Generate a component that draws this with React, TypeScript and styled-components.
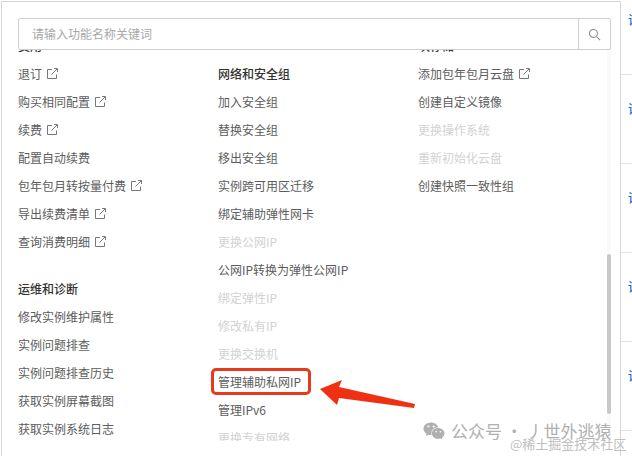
import React from 'react';
import styled, { createGlobalStyle } from 'styled-components';
import { FaWeixin } from 'react-icons/fa';

type Entry = { label: string; external?: boolean; disabled?: boolean; marked?: boolean };
type Group = { title: string; items: Entry[] };

const columns: { offset: number; groups: Group[] }[] = [
  {
    offset: 0,
    groups: [
      {
        title: '费用',
        items: [
          { label: '退订', external: true },
          { label: '购买相同配置', external: true },
          { label: '续费', external: true },
          { label: '配置自动续费' },
          { label: '包年包月转按量付费', external: true },
          { label: '导出续费清单', external: true },
          { label: '查询消费明细', external: true },
        ],
      },
      {
        title: '运维和诊断',
        items: [
          { label: '修改实例维护属性' },
          { label: '实例问题排查' },
          { label: '实例问题排查历史' },
          { label: '获取实例屏幕截图' },
          { label: '获取实例系统日志' },
        ],
      },
    ],
  },
  {
    offset: 28,
    groups: [
      {
        title: '网络和安全组',
        items: [
          { label: '加入安全组' },
          { label: '替换安全组' },
          { label: '移出安全组' },
          { label: '实例跨可用区迁移' },
          { label: '绑定辅助弹性网卡' },
          { label: '更换公网IP', disabled: true },
          { label: '公网IP转换为弹性公网IP' },
          { label: '绑定弹性IP', disabled: true },
          { label: '修改私有IP', disabled: true },
          { label: '更换交换机', disabled: true },
          { label: '管理辅助私网IP', marked: true },
          { label: '管理IPv6' },
          { label: '更换专有网络', disabled: true },
        ],
      },
    ],
  },
  {
    offset: 0,
    groups: [
      {
        title: '块存储',
        items: [
          { label: '添加包年包月云盘', external: true },
          { label: '创建自定义镜像' },
          { label: '更换操作系统', disabled: true },
          { label: '重新初始化云盘', disabled: true },
          { label: '创建快照一致性组' },
        ],
      },
    ],
  },
];

const GlobalStyle = createGlobalStyle`
  html, body {
    margin: 0;
    background: #fff;
    font-family: "Noto Sans CJK SC", "Noto Sans", sans-serif;
  }
`;

const Page = styled.div`
  display: flex;
  width: 632px;
  height: 456px;
  overflow: hidden;
  position: relative;
`;

const Popup = styled.div`
  flex: none;
  box-sizing: border-box;
  width: 620px;
  height: 455px;
  margin: 1px 0 0 1px;
  padding: 16px 9px 0 16px;
  border: 1px solid #d6d6d6;
  border-bottom: none;
  display: flex;
  flex-direction: column;
`;

const SearchBar = styled.div`
  flex: none;
  display: flex;
  height: 32px;
  box-sizing: border-box;
  border: 1px solid #cfcfcf;
  border-radius: 2px;
  position: relative;
  z-index: 1;
  background: #fff;
`;

const SearchInput = styled.input`
  flex: 1;
  min-width: 0;
  border: none;
  outline: none;
  padding: 0 13px 2px;
  font: 12px "Noto Sans CJK SC", sans-serif;
  background: transparent;

  &::placeholder {
    color: #a8a8a8;
    opacity: 1;
  }
`;

const SearchButton = styled.div`
  flex: none;
  width: 31px;
  border-left: 1px solid #cfcfcf;
  display: flex;
  align-items: center;
  justify-content: center;
  color: #888;
`;

const ListArea = styled.div`
  flex: none;
  height: 391px;
  overflow: hidden;
  position: relative;
`;

const Grid = styled.div`
  display: grid;
  grid-template-columns: repeat(3, 200px);
  margin-top: -17px;
`;

const Column = styled.div<{ $offset: number }>`
  padding-top: ${(p) => p.$offset}px;
`;

const GroupBox = styled.div`
  margin-bottom: 21px;
`;

const GroupTitle = styled.div`
  height: 26px;
  line-height: 26px;
  font-size: 12px;
  font-weight: 500;
  color: #333;
`;

const Item = styled.div<{ $disabled?: boolean; $marked?: boolean }>`
  position: relative;
  height: 28px;
  display: flex;
  align-items: center;
  gap: 5px;
  font-size: 12px;
  color: ${(p) => (p.$disabled ? '#d2d2d2' : '#5c5c5c')};

  ${(p) =>
    p.$marked &&
    `
    &::after {
      content: '';
      position: absolute;
      left: -7px;
      top: 1px;
      width: 100px;
      height: 27px;
      box-sizing: border-box;
      border: 3px solid #e8391b;
      border-radius: 5px;
    }
  `}
`;

const Track = styled.div`
  position: absolute;
  top: 0;
  bottom: 0;
  right: 0;
  width: 4px;
  background: #fafafa;
`;

const Thumb = styled.div`
  position: absolute;
  top: 204px;
  left: 0;
  width: 4px;
  height: 160px;
  border-radius: 2px;
  background: #c8c8c8;
`;

const BackTable = styled.div`
  flex: 1;
  margin-top: -14px;
  overflow: hidden;
`;

const BackRow = styled.div`
  height: 89px;
  box-sizing: border-box;
  border-bottom: 1px solid #e2e2e2;
  padding: 26px 0 0 7px;
  font-size: 12px;
  font-weight: 500;
  line-height: 16px;
  white-space: nowrap;
  color: #1a66c9;
`;

const Arrow = styled.svg`
  position: absolute;
  left: 318px;
  top: 378px;
`;

const Watermark = styled.div`
  position: absolute;
  left: 423px;
  top: 420px;
  display: flex;
  align-items: center;
  gap: 6px;
  font-size: 17px;
  line-height: 22px;
  color: #b0b0b0;
  white-space: nowrap;
`;

const SubMark = styled.div`
  position: absolute;
  left: 510px;
  top: 436px;
  font-size: 13px;
  line-height: 16px;
  color: #c0c0c0;
  white-space: nowrap;
`;

const ExternalIcon = () => (
  <svg width="11" height="11" viewBox="0 0 11 11" fill="none" stroke="#777" strokeWidth="1">
    <path d="M5 1.5H0.5V10.5H9.5V6.5" />
    <path d="M4.5 6.5L10 1M7 0.5H10.5V4" />
  </svg>
);

const SearchIcon = () => (
  <svg width="13" height="13" viewBox="0 0 14 14" fill="none" stroke="currentColor" strokeWidth="1.1">
    <circle cx="5.8" cy="5.8" r="4.3" />
    <path d="M9 9L13 13" />
  </svg>
);

export default function App() {
  return (
    <Page>
      <GlobalStyle />
      <Popup>
        <SearchBar>
          <SearchInput placeholder="请输入功能名称关键词" readOnly />
          <SearchButton>
            <SearchIcon />
          </SearchButton>
        </SearchBar>
        <ListArea>
          <Grid>
            {columns.map((column, i) => (
              <Column key={i} $offset={column.offset}>
                {column.groups.map((group) => (
                  <GroupBox key={group.title}>
                    <GroupTitle>{group.title}</GroupTitle>
                    {group.items.map((item) => (
                      <Item key={item.label} $disabled={item.disabled} $marked={item.marked}>
                        {item.label}
                        {item.external && <ExternalIcon />}
                      </Item>
                    ))}
                  </GroupBox>
                ))}
              </Column>
            ))}
          </Grid>
          <Track>
            <Thumb />
          </Track>
        </ListArea>
      </Popup>
      <BackTable>
        {[0, 1, 2, 3, 4].map((n) => (
          <BackRow key={n}>详情</BackRow>
        ))}
      </BackTable>
      <Arrow width="100" height="32" viewBox="0 0 100 32">
        <polygon points="2,11 24,2 21,9 97,26 96,30 21,20 19,27" fill="#f03012" />
      </Arrow>
      <Watermark>
        <FaWeixin size={22} />
        公众号 · 丿世外逃猿
      </Watermark>
      <SubMark>@稀土掘金技术社区</SubMark>
    </Page>
  );
}
